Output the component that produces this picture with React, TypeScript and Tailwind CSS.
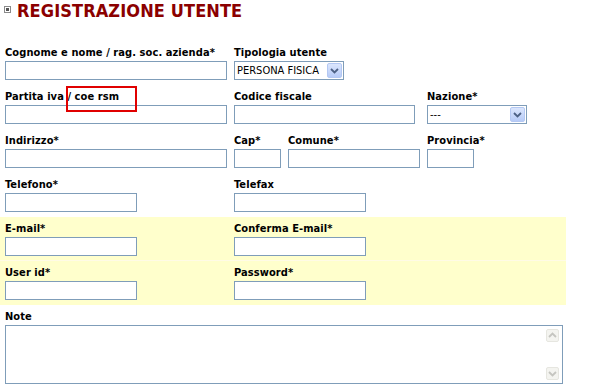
import { ReactNode } from 'react'

const font = { fontFamily: '"DejaVu Sans Condensed", "DejaVu Sans", Tahoma, sans-serif' }

function Label({ children }: { children: ReactNode }) {
    return <div className="h-[16px] text-[11px] leading-[16px] font-bold tracking-[0.08px] text-black">{children}</div>
}

function Input({ className = '' }: { className?: string }) {
    return <div className={`h-[19px] border border-[#7f9db9] bg-white ${className}`} />
}

function Chevron({ color = '#4d6185' }: { color?: string }) {
    return (
        <svg width="9" height="6" viewBox="0 0 9 6">
            <path d="M1 1 L4.5 4.5 L8 1" fill="none" stroke={color} strokeWidth="1.8" />
        </svg>
    )
}

function Select({ value, className = '' }: { value: string; className?: string }) {
    return (
        <div className={`flex h-[19px] items-center border border-[#7f9db9] bg-white ${className}`}>
            <span className="flex-1 truncate pl-[2px] text-[11px] font-normal leading-[17px] text-black">{value}</span>
            <div className="mr-[1px] flex h-[15px] w-[15px] items-center justify-center rounded-[2px] border border-[#b4c8f3] bg-gradient-to-b from-[#dbe6fd] to-[#b7cbf7]">
                <Chevron />
            </div>
        </div>
    )
}

function Row({ children, className = '' }: { children: ReactNode; className?: string }) {
    return <div className={`grid h-[44px] grid-cols-[229px_193px_144px] pt-[4px] ${className}`}>{children}</div>
}

function Cell({ children }: { children?: ReactNode }) {
    return <div className="px-[5px]">{children}</div>
}

export default function App() {
    return (
        <div className="relative h-[389px] w-[611px] overflow-hidden bg-white" style={font}>
            <div className="flex h-[41px] items-start gap-[6px] pl-[4px] pt-[1px]">
                <div className="mt-[5px] flex h-[7px] w-[7px] items-center justify-center border border-[#8a8a8a] bg-white">
                    <div className="h-[3px] w-[3px] bg-[#555]" />
                </div>
                <h1 className="text-[18px] font-bold leading-[20px] tracking-[0.1px] text-[#8b0000]">REGISTRAZIONE UTENTE</h1>
            </div>

            <div className="w-[566px]">
                <Row>
                    <Cell>
                        <Label>Cognome e nome / rag. soc. azienda*</Label>
                        <Input className="w-[222px]" />
                    </Cell>
                    <Cell>
                        <Label>Tipologia utente</Label>
                        <Select value="PERSONA FISICA" className="w-[110px]" />
                    </Cell>
                    <Cell />
                </Row>
                <Row>
                    <Cell>
                        <Label>Partita iva / coe rsm</Label>
                        <Input className="w-[222px]" />
                    </Cell>
                    <Cell>
                        <Label>Codice fiscale</Label>
                        <Input className="w-[181px]" />
                    </Cell>
                    <Cell>
                        <Label>Nazione*</Label>
                        <Select value="---" className="w-[100px]" />
                    </Cell>
                </Row>
                <Row>
                    <Cell>
                        <Label>Indirizzo*</Label>
                        <Input className="w-[222px]" />
                    </Cell>
                    <Cell>
                        <div className="flex gap-[7px]">
                            <div>
                                <Label>Cap*</Label>
                                <Input className="w-[47px]" />
                            </div>
                            <div>
                                <Label>Comune*</Label>
                                <Input className="w-[132px]" />
                            </div>
                        </div>
                    </Cell>
                    <Cell>
                        <Label>Provincia*</Label>
                        <Input className="w-[47px]" />
                    </Cell>
                </Row>
                <Row>
                    <Cell>
                        <Label>Telefono*</Label>
                        <Input className="w-[132px]" />
                    </Cell>
                    <Cell>
                        <Label>Telefax</Label>
                        <Input className="w-[132px]" />
                    </Cell>
                    <Cell />
                </Row>
                <Row className="border-b border-[#fffbe6] bg-[#ffffcc]">
                    <Cell>
                        <Label>E-mail*</Label>
                        <Input className="w-[132px]" />
                    </Cell>
                    <Cell>
                        <Label>Conferma E-mail*</Label>
                        <Input className="w-[132px]" />
                    </Cell>
                    <Cell />
                </Row>
                <Row className="bg-[#ffffcc]">
                    <Cell>
                        <Label>User id*</Label>
                        <Input className="w-[132px]" />
                    </Cell>
                    <Cell>
                        <Label>Password*</Label>
                        <Input className="w-[132px]" />
                    </Cell>
                    <Cell />
                </Row>
                <div className="px-[5px] pt-[4px]">
                    <Label>Note</Label>
                    <div className="flex h-[59px] w-[558px] border border-[#7f9db9] bg-white">
                        <div className="flex-1" />
                        <div className="flex w-[16px] flex-col justify-between py-[3px] pr-[2px]">
                            <div className="flex h-[13px] w-[13px] rotate-180 items-center justify-center rounded-[2px] border border-[#e6e6e0] bg-[#f4f4f0]">
                                <Chevron color="#c5c5c0" />
                            </div>
                            <div className="flex h-[13px] w-[13px] items-center justify-center rounded-[2px] border border-[#e6e6e0] bg-[#f4f4f0]">
                                <Chevron color="#c5c5c0" />
                            </div>
                        </div>
                    </div>
                </div>
            </div>

            <div className="absolute left-[66px] top-[86px] h-[26px] w-[71px] border-2 border-[#e00000]" />
        </div>
    )
}
